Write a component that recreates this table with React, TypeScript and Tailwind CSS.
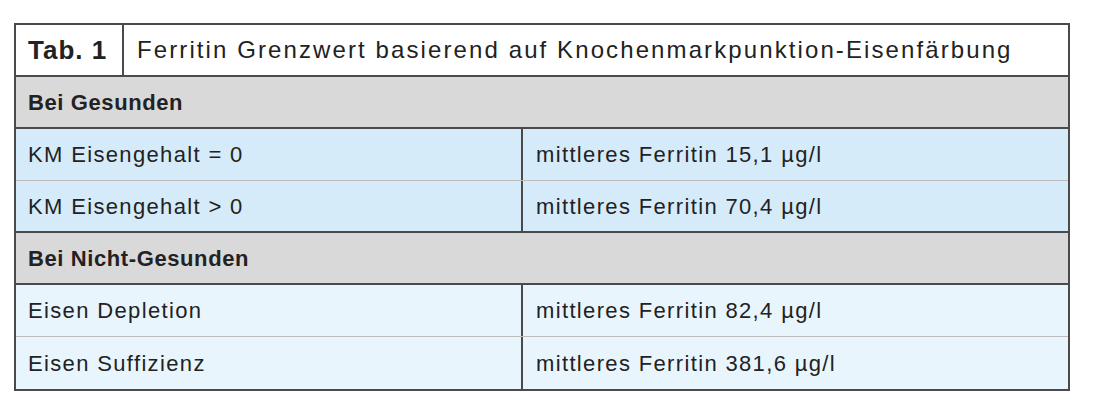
const rows1 = [
  ['KM Eisengehalt = 0', 'mittleres Ferritin 15,1 µg/l'],
  ['KM Eisengehalt > 0', 'mittleres Ferritin 70,4 µg/l'],
]

const rows2 = [
  ['Eisen Depletion', 'mittleres Ferritin 82,4 µg/l'],
  ['Eisen Suffizienz', 'mittleres Ferritin 381,6 µg/l'],
]

function DataRow({ left, right, className }: { left: string; right: string; className: string }) {
  return (
    <div className={`flex h-[52px] tracking-[1.35px] ${className}`}>
      <div className="w-[507px] flex items-center pl-3 border-r-2 border-[#4a4a4a]">{left}</div>
      <div className="flex-1 flex items-center pl-[13px]">{right}</div>
    </div>
  )
}

function GroupRow({ label }: { label: string }) {
  return (
    <div className="flex h-[52px] items-center pl-3 bg-[#d9d9d9] border-b-2 border-[#4a4a4a] font-bold tracking-[0.6px]">
      {label}
    </div>
  )
}

export default function App() {
  return (
    <div className="w-[1100px] h-[412px] bg-white pt-[23px] pl-[14px] text-[#222] text-[22px] font-['Liberation_Sans',sans-serif]">
      <div className="w-[1056px] border-2 border-[#4a4a4a]">
        <div className="flex h-[52px] border-b-2 border-[#4a4a4a] bg-white">
          <div className="w-[108px] flex items-center pl-3 border-r-2 border-[#4a4a4a] font-bold text-[26px] tracking-[1px]">
            Tab. 1
          </div>
          <div className="flex-1 flex items-center pl-[13px] text-[24px] tracking-[2.1px]">
            Ferritin Grenzwert basierend auf Knochenmarkpunktion-Eisenfärbung
          </div>
        </div>
        <GroupRow label="Bei Gesunden" />
        {rows1.map(([l, r], i) => (
          <DataRow
            key={l}
            left={l}
            right={r}
            className={
              i === rows1.length - 1
                ? 'bg-[#d5ebfa] border-b-2 border-[#4a4a4a]'
                : 'bg-[#d5ebfa] border-b border-[#bcbcbc]'
            }
          />
        ))}
        <GroupRow label="Bei Nicht-Gesunden" />
        {rows2.map(([l, r], i) => (
          <DataRow
            key={l}
            left={l}
            right={r}
            className={i === rows2.length - 1 ? 'bg-[#e9f5fd]' : 'bg-[#e9f5fd] border-b border-[#bcbcbc]'}
          />
        ))}
      </div>
    </div>
  )
}
